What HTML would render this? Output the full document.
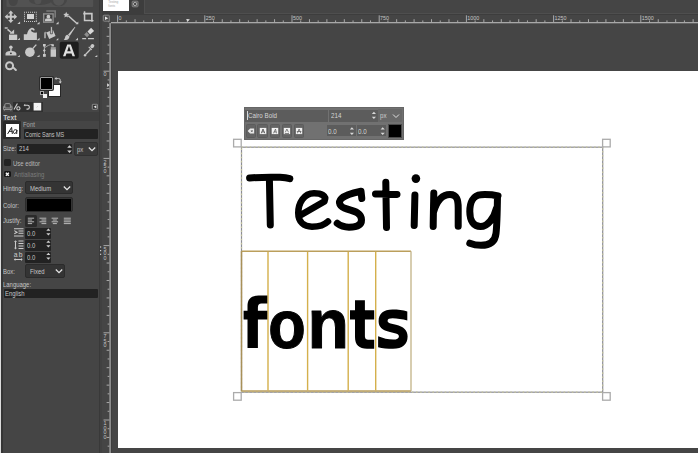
<!DOCTYPE html>
<html><head><meta charset="utf-8">
<style>
*{margin:0;padding:0;box-sizing:border-box}
html,body{width:698px;height:453px;overflow:hidden;background:#454545;font-family:"Liberation Sans",sans-serif;position:relative}
.a{position:absolute}
.lbl{position:absolute;font-size:6.6px;color:#c4c4c4;line-height:8px;white-space:nowrap;transform:scaleX(.9);transform-origin:0 0}
.ent{position:absolute;background:#222222;border-radius:1px}
.btn{position:absolute;background:#343434;border-radius:2px;border:0.8px solid #2b2b2b}
</style></head><body>
<!-- far left border -->
<div class="a" style="left:0;top:0;width:1px;height:453px;background:#dcdcdc"></div>
<div class="a" style="left:1px;top:0;width:2px;height:453px;background:#353535"></div>
<!-- dock separator -->
<div class="a" style="left:98.6px;top:0;width:1.2px;height:453px;background:#393939"></div><div class="a" style="left:99.8px;top:0;width:2.6px;height:453px;background:#414141"></div><div class="a" style="left:111px;top:23px;width:1px;height:430px;background:#3e3e3e"></div>

<!-- top tab bar -->
<div class="a" style="left:102px;top:0;width:42px;height:13.8px;background:#3d3d3d"></div>
<div class="a" style="left:144px;top:0;width:554px;height:13.8px;background:#454545;border-left:1px solid #4e4e4e;border-bottom:1px solid #4e4e4e"></div>
<div class="a" style="left:103px;top:0;width:26px;height:11px;background:#fff"></div>
<svg class="a" style="left:131px;top:0" width="9" height="9" viewBox="131 0 9 9">
<rect x="132.2" y="1.2" width="5.8" height="5.6" rx="0.8" fill="#4a4a4a" stroke="#8a8a8a" stroke-width="0.9"/>
<circle cx="135.1" cy="4" r="1.7" fill="none" stroke="#b8b8b8" stroke-width="0.9"/>
</svg>
<svg class="a" style="left:103px;top:0" width="27" height="12" viewBox="103 0 27 12">
<text x="108.3" y="3" font-size="3.2" fill="#a8a8a8" font-family="Liberation Sans">Testing</text><text x="108.3" y="6.8" font-size="3.2" fill="#a8a8a8" font-family="Liberation Sans">fonts</text>
</svg>
<div class="a" style="left:102px;top:13.8px;width:596px;height:1px;background:#3d3d3d"></div>

<!-- top ruler -->

<!-- left ruler -->
<svg class="a" style="left:0;top:0" width="698" height="453" viewBox="0 0 698 453">
<rect x="111" y="22" width="587" height="1.3" fill="#a8a8a8"/>
<rect x="109.2" y="23" width="1.8" height="430" fill="#8c8c8c"/>
<rect x="108.38" y="20.4" width="1" height="1.8" fill="#a8a8a8"/>
<rect x="117.10" y="15.3" width="1" height="7" fill="#a8a8a8"/>
<text x="118.50" y="20.2" font-size="5.4" fill="#c4c4c4" font-family="Liberation Sans">0</text>
<rect x="125.82" y="20.4" width="1" height="1.8" fill="#a8a8a8"/>
<rect x="134.54" y="19.2" width="1" height="3" fill="#a8a8a8"/>
<rect x="143.26" y="20.4" width="1" height="1.8" fill="#a8a8a8"/>
<rect x="151.98" y="19.2" width="1" height="3" fill="#a8a8a8"/>
<rect x="160.70" y="20.4" width="1" height="1.8" fill="#a8a8a8"/>
<rect x="169.42" y="19.2" width="1" height="3" fill="#a8a8a8"/>
<rect x="178.14" y="20.4" width="1" height="1.8" fill="#a8a8a8"/>
<rect x="186.86" y="19.2" width="1" height="3" fill="#a8a8a8"/>
<rect x="195.58" y="20.4" width="1" height="1.8" fill="#a8a8a8"/>
<rect x="204.30" y="15.3" width="1" height="7" fill="#a8a8a8"/>
<text x="205.70" y="20.2" font-size="5.4" fill="#c4c4c4" font-family="Liberation Sans">250</text>
<rect x="213.02" y="20.4" width="1" height="1.8" fill="#a8a8a8"/>
<rect x="221.74" y="19.2" width="1" height="3" fill="#a8a8a8"/>
<rect x="230.46" y="20.4" width="1" height="1.8" fill="#a8a8a8"/>
<rect x="239.18" y="19.2" width="1" height="3" fill="#a8a8a8"/>
<rect x="247.90" y="20.4" width="1" height="1.8" fill="#a8a8a8"/>
<rect x="256.62" y="19.2" width="1" height="3" fill="#a8a8a8"/>
<rect x="265.34" y="20.4" width="1" height="1.8" fill="#a8a8a8"/>
<rect x="274.06" y="19.2" width="1" height="3" fill="#a8a8a8"/>
<rect x="282.78" y="20.4" width="1" height="1.8" fill="#a8a8a8"/>
<rect x="291.50" y="15.3" width="1" height="7" fill="#a8a8a8"/>
<text x="292.90" y="20.2" font-size="5.4" fill="#c4c4c4" font-family="Liberation Sans">500</text>
<rect x="300.22" y="20.4" width="1" height="1.8" fill="#a8a8a8"/>
<rect x="308.94" y="19.2" width="1" height="3" fill="#a8a8a8"/>
<rect x="317.66" y="20.4" width="1" height="1.8" fill="#a8a8a8"/>
<rect x="326.38" y="19.2" width="1" height="3" fill="#a8a8a8"/>
<rect x="335.10" y="20.4" width="1" height="1.8" fill="#a8a8a8"/>
<rect x="343.82" y="19.2" width="1" height="3" fill="#a8a8a8"/>
<rect x="352.54" y="20.4" width="1" height="1.8" fill="#a8a8a8"/>
<rect x="361.26" y="19.2" width="1" height="3" fill="#a8a8a8"/>
<rect x="369.98" y="20.4" width="1" height="1.8" fill="#a8a8a8"/>
<rect x="378.70" y="15.3" width="1" height="7" fill="#a8a8a8"/>
<text x="380.10" y="20.2" font-size="5.4" fill="#c4c4c4" font-family="Liberation Sans">750</text>
<rect x="387.42" y="20.4" width="1" height="1.8" fill="#a8a8a8"/>
<rect x="396.14" y="19.2" width="1" height="3" fill="#a8a8a8"/>
<rect x="404.86" y="20.4" width="1" height="1.8" fill="#a8a8a8"/>
<rect x="413.58" y="19.2" width="1" height="3" fill="#a8a8a8"/>
<rect x="422.30" y="20.4" width="1" height="1.8" fill="#a8a8a8"/>
<rect x="431.02" y="19.2" width="1" height="3" fill="#a8a8a8"/>
<rect x="439.74" y="20.4" width="1" height="1.8" fill="#a8a8a8"/>
<rect x="448.46" y="19.2" width="1" height="3" fill="#a8a8a8"/>
<rect x="457.18" y="20.4" width="1" height="1.8" fill="#a8a8a8"/>
<rect x="465.90" y="15.3" width="1" height="7" fill="#a8a8a8"/>
<text x="467.30" y="20.2" font-size="5.4" fill="#c4c4c4" font-family="Liberation Sans">1000</text>
<rect x="474.62" y="20.4" width="1" height="1.8" fill="#a8a8a8"/>
<rect x="483.34" y="19.2" width="1" height="3" fill="#a8a8a8"/>
<rect x="492.06" y="20.4" width="1" height="1.8" fill="#a8a8a8"/>
<rect x="500.78" y="19.2" width="1" height="3" fill="#a8a8a8"/>
<rect x="509.50" y="20.4" width="1" height="1.8" fill="#a8a8a8"/>
<rect x="518.22" y="19.2" width="1" height="3" fill="#a8a8a8"/>
<rect x="526.94" y="20.4" width="1" height="1.8" fill="#a8a8a8"/>
<rect x="535.66" y="19.2" width="1" height="3" fill="#a8a8a8"/>
<rect x="544.38" y="20.4" width="1" height="1.8" fill="#a8a8a8"/>
<rect x="553.10" y="15.3" width="1" height="7" fill="#a8a8a8"/>
<text x="554.50" y="20.2" font-size="5.4" fill="#c4c4c4" font-family="Liberation Sans">1250</text>
<rect x="561.82" y="20.4" width="1" height="1.8" fill="#a8a8a8"/>
<rect x="570.54" y="19.2" width="1" height="3" fill="#a8a8a8"/>
<rect x="579.26" y="20.4" width="1" height="1.8" fill="#a8a8a8"/>
<rect x="587.98" y="19.2" width="1" height="3" fill="#a8a8a8"/>
<rect x="596.70" y="20.4" width="1" height="1.8" fill="#a8a8a8"/>
<rect x="605.42" y="19.2" width="1" height="3" fill="#a8a8a8"/>
<rect x="614.14" y="20.4" width="1" height="1.8" fill="#a8a8a8"/>
<rect x="622.86" y="19.2" width="1" height="3" fill="#a8a8a8"/>
<rect x="631.58" y="20.4" width="1" height="1.8" fill="#a8a8a8"/>
<rect x="640.30" y="15.3" width="1" height="7" fill="#a8a8a8"/>
<text x="641.70" y="20.2" font-size="5.4" fill="#c4c4c4" font-family="Liberation Sans">1500</text>
<rect x="649.02" y="20.4" width="1" height="1.8" fill="#a8a8a8"/>
<rect x="657.74" y="19.2" width="1" height="3" fill="#a8a8a8"/>
<rect x="666.46" y="20.4" width="1" height="1.8" fill="#a8a8a8"/>
<rect x="675.18" y="19.2" width="1" height="3" fill="#a8a8a8"/>
<rect x="683.90" y="20.4" width="1" height="1.8" fill="#a8a8a8"/>
<rect x="692.62" y="19.2" width="1" height="3" fill="#a8a8a8"/>
<rect x="107.6" y="27.10" width="1.8" height="1" fill="#a8a8a8"/>
<rect x="106.6" y="35.82" width="2.8" height="1" fill="#a8a8a8"/>
<rect x="107.6" y="44.54" width="1.8" height="1" fill="#a8a8a8"/>
<rect x="106.6" y="53.26" width="2.8" height="1" fill="#a8a8a8"/>
<rect x="107.6" y="61.98" width="1.8" height="1" fill="#a8a8a8"/>
<rect x="103.5" y="70.70" width="6" height="1" fill="#a8a8a8"/>
<text x="103.4" y="76.30" font-size="5.4" fill="#c4c4c4" font-family="Liberation Sans">0</text>
<rect x="107.6" y="79.42" width="1.8" height="1" fill="#a8a8a8"/>
<rect x="106.6" y="88.14" width="2.8" height="1" fill="#a8a8a8"/>
<rect x="107.6" y="96.86" width="1.8" height="1" fill="#a8a8a8"/>
<rect x="106.6" y="105.58" width="2.8" height="1" fill="#a8a8a8"/>
<rect x="107.6" y="114.30" width="1.8" height="1" fill="#a8a8a8"/>
<rect x="106.6" y="123.02" width="2.8" height="1" fill="#a8a8a8"/>
<rect x="107.6" y="131.74" width="1.8" height="1" fill="#a8a8a8"/>
<rect x="106.6" y="140.46" width="2.8" height="1" fill="#a8a8a8"/>
<rect x="107.6" y="149.18" width="1.8" height="1" fill="#a8a8a8"/>
<rect x="103.5" y="157.90" width="6" height="1" fill="#a8a8a8"/>
<text x="103.4" y="163.50" font-size="5.4" fill="#c4c4c4" font-family="Liberation Sans">2</text><text x="103.4" y="168.10" font-size="5.4" fill="#c4c4c4" font-family="Liberation Sans">5</text><text x="103.4" y="172.70" font-size="5.4" fill="#c4c4c4" font-family="Liberation Sans">0</text>
<rect x="107.6" y="166.62" width="1.8" height="1" fill="#a8a8a8"/>
<rect x="106.6" y="175.34" width="2.8" height="1" fill="#a8a8a8"/>
<rect x="107.6" y="184.06" width="1.8" height="1" fill="#a8a8a8"/>
<rect x="106.6" y="192.78" width="2.8" height="1" fill="#a8a8a8"/>
<rect x="107.6" y="201.50" width="1.8" height="1" fill="#a8a8a8"/>
<rect x="106.6" y="210.22" width="2.8" height="1" fill="#a8a8a8"/>
<rect x="107.6" y="218.94" width="1.8" height="1" fill="#a8a8a8"/>
<rect x="106.6" y="227.66" width="2.8" height="1" fill="#a8a8a8"/>
<rect x="107.6" y="236.38" width="1.8" height="1" fill="#a8a8a8"/>
<rect x="103.5" y="245.10" width="6" height="1" fill="#a8a8a8"/>
<text x="103.4" y="250.70" font-size="5.4" fill="#c4c4c4" font-family="Liberation Sans">5</text><text x="103.4" y="255.30" font-size="5.4" fill="#c4c4c4" font-family="Liberation Sans">0</text><text x="103.4" y="259.90" font-size="5.4" fill="#c4c4c4" font-family="Liberation Sans">0</text>
<rect x="107.6" y="253.82" width="1.8" height="1" fill="#a8a8a8"/>
<rect x="106.6" y="262.54" width="2.8" height="1" fill="#a8a8a8"/>
<rect x="107.6" y="271.26" width="1.8" height="1" fill="#a8a8a8"/>
<rect x="106.6" y="279.98" width="2.8" height="1" fill="#a8a8a8"/>
<rect x="107.6" y="288.70" width="1.8" height="1" fill="#a8a8a8"/>
<rect x="106.6" y="297.42" width="2.8" height="1" fill="#a8a8a8"/>
<rect x="107.6" y="306.14" width="1.8" height="1" fill="#a8a8a8"/>
<rect x="106.6" y="314.86" width="2.8" height="1" fill="#a8a8a8"/>
<rect x="107.6" y="323.58" width="1.8" height="1" fill="#a8a8a8"/>
<rect x="103.5" y="332.30" width="6" height="1" fill="#a8a8a8"/>
<text x="103.4" y="337.90" font-size="5.4" fill="#c4c4c4" font-family="Liberation Sans">7</text><text x="103.4" y="342.50" font-size="5.4" fill="#c4c4c4" font-family="Liberation Sans">5</text><text x="103.4" y="347.10" font-size="5.4" fill="#c4c4c4" font-family="Liberation Sans">0</text>
<rect x="107.6" y="341.02" width="1.8" height="1" fill="#a8a8a8"/>
<rect x="106.6" y="349.74" width="2.8" height="1" fill="#a8a8a8"/>
<rect x="107.6" y="358.46" width="1.8" height="1" fill="#a8a8a8"/>
<rect x="106.6" y="367.18" width="2.8" height="1" fill="#a8a8a8"/>
<rect x="107.6" y="375.90" width="1.8" height="1" fill="#a8a8a8"/>
<rect x="106.6" y="384.62" width="2.8" height="1" fill="#a8a8a8"/>
<rect x="107.6" y="393.34" width="1.8" height="1" fill="#a8a8a8"/>
<rect x="106.6" y="402.06" width="2.8" height="1" fill="#a8a8a8"/>
<rect x="107.6" y="410.78" width="1.8" height="1" fill="#a8a8a8"/>
<rect x="103.5" y="419.50" width="6" height="1" fill="#a8a8a8"/>
<text x="103.4" y="425.10" font-size="5.4" fill="#c4c4c4" font-family="Liberation Sans">1</text><text x="103.4" y="429.70" font-size="5.4" fill="#c4c4c4" font-family="Liberation Sans">0</text><text x="103.4" y="434.30" font-size="5.4" fill="#c4c4c4" font-family="Liberation Sans">0</text><text x="103.4" y="438.90" font-size="5.4" fill="#c4c4c4" font-family="Liberation Sans">0</text>
<rect x="107.6" y="428.22" width="1.8" height="1" fill="#a8a8a8"/>
<rect x="106.6" y="436.94" width="2.8" height="1" fill="#a8a8a8"/>
<rect x="107.6" y="445.66" width="1.8" height="1" fill="#a8a8a8"/>
<path d="M186 19.3h3.8l-1.9 2.2z" fill="#e8e8e8"/>
<path d="M107.2 83.2v3.8l2.2-1.9z" fill="#e8e8e8"/>
</svg>
<svg class="a" style="left:102px;top:14px" width="9" height="9" viewBox="102 14 9 9">
<rect x="103.3" y="15.2" width="6" height="6" rx="0.8" fill="#4c4c4c" stroke="#8c8c8c" stroke-width="0.9"/>
<path d="M105 16.4l3.2 1.8-3.2 1.8z" fill="#e8e8e8"/>
</svg>

<!-- image -->
<div class="a" style="left:118px;top:71px;width:580px;height:377px;background:#fff"></div>

<svg class="a" style="left:0;top:0" width="100" height="100" viewBox="0 0 100 100">
<path d="M6.5 0H93.2V6Q93.2 7 92.2 7H7.5Q6.5 7 6.5 6Z" fill="#525252"/>
<ellipse cx="13.2" cy="0.5" rx="4.6" ry="5.6" fill="#464646"/>
<ellipse cx="40.5" cy="0" rx="11.5" ry="5" fill="#474747"/>
<ellipse cx="58.7" cy="0" rx="8.3" ry="6.3" fill="#474747"/>
<ellipse cx="37.9" cy="0" rx="3.6" ry="4.2" fill="#535353"/>
<ellipse cx="58.7" cy="0" rx="5.6" ry="5.8" fill="#555555"/>
<g fill="#c8c8c8" stroke="none">
<!-- move -->
<path d="M9.8 13h2v7.6h-2z M7 15.8h7.6v2h-7.6z"/>
<path d="M10.8 10.6l2.7 3h-5.4z M10.8 23l2.7-3h-5.4z M4.7 16.8l3-2.7v5.4z M17.1 16.8l-3-2.7v5.4z"/>
<!-- rect select -->
<path d="M24 11.8h1v1h-1z M26 11.8h1v1h-1z M28 11.8h1v1h-1z M30 11.8h1v1h-1z M32 11.8h1v1h-1z M34 11.8h1v1h-1z M35.8 11.8h1v1h-1z
M24 13.8h1v1h-1z M24 15.8h1v1h-1z M24 17.8h1v1h-1z M24 19.8h1v1h-1z M24 21h1v1h-1z
M35.8 13.8h1v1h-1z M35.8 15.8h1v1h-1z M35.8 17.8h1v1h-1z M35.8 19.8h1v1h-1z M35.8 21h1v1h-1z
M26 21h1v1h-1z M28 21h1v1h-1z M30 21h1v1h-1z M32 21h1v1h-1z M34 21h1v1h-1z"/>
<rect x="27" y="14" width="7" height="5" fill="#d4d4d4"/>
<!-- fg select -->
<path d="M46.3 10.2h9.7v7.3h-1.6v-5.7h-8.1z" fill="#7a7a7a"/>
<rect x="43.7" y="13.9" width="9.4" height="8.3" fill="#3c3c3c" stroke="#8e8e8e" stroke-width="1.4"/>
<circle cx="48.4" cy="16.7" r="1.9"/>
<path d="M45 21.2v-1.4q0-1.2 1.2-1.2h4.4q1.2 0 1.2 1.2v1.4z"/>
<!-- wand -->
<path d="M66.2 11.8l0.9 1.9 2 0.3-1.5 1.4 0.4 2-1.8-1-1.8 1 0.4-2-1.5-1.4 2-0.3z"/>
<path d="M67.8 16.2l1-1 8.6 7.8-1 1z"/>
<!-- crop -->
<path d="M83.8 11.2h1.5v8.5h5.2v1.6h-6.7z M83.2 12.8h9.5v1.6h-9.5z M91.1 12.8h1.6v8.9h-1.6z M90.5 20.1h3v1.2h-3z"/>
<!-- unified transform -->
<path d="M4.7 27.3h3v1.4h-3z"/>
<path d="M8 28.8l4 3.4-1 1.1-4-3.4z"/>
<path d="M14.1 33.8v-4.2l-4.5 4.2z"/>
<rect x="9" y="34.6" width="8.2" height="5.4" fill="#cacaca"/>
<!-- warp -->
<path d="M23.8 34.2h3.2c0.6-2.5 1.6-5.6 4.2-6.3 1.8-0.5 3.4 0.6 3.6 2.3l-1.6 0.2c-0.3-0.8-1-1-1.5-0.9-1 0.3-0.6 1.6 0.3 2.2 1 0.7 2.3 1 3.3 1 0.4 0 0.9-0.1 1.1-0.1h0.5v7.4h-13.1z"/>
<!-- bucket -->
<path d="M46.3 32.6l6.6-2.8 2.7 6.3-6.4 3z"/>
<path d="M50.4 26.6h2v7.2h-2z" stroke="#3a3a3a" stroke-width="0.7"/>
<path d="M44 38.2v-4.6c0-1.2 0.9-1.9 2-1.7l0.9 0.2-0.9 1.2v4.9z" fill="#9a9a9a"/>
<!-- brush -->
<path d="M74.9 26.8l0.4 0.5-5.6 8.6-1.7-1.1z"/>
<path d="M67.4 34.8l2.2 1.6c-0.5 1.7-1.3 3-2.6 3.4-1.2 0.4-2.6 0.2-3.3 0.2 0.7-0.6 1.1-1.7 1.5-3 0.4-1.3 1.2-2.3 2.2-2.2z"/>
<!-- eraser -->
<path d="M91.1 27.8l3 3.2-4 3.5-2.6-3.1z" fill="#d8d8d8"/>
<path d="M86.7 31.9l2.6 3.1-2.3 2.2-2.8-2.8z" fill="#8e8e8e"/>
<path d="M82.2 38h3.9v1.3h-3.9z M88 38h5.9v1.3h-5.9z"/>
<!-- clone -->
<circle cx="10.9" cy="47.3" r="1.7"/>
<path d="M10.2 48.5h1.4v2.8h-1.4z"/>
<path d="M5.5 55.4v-1.6c0-1.6 2-2.6 4.7-2.8h1.4c2.7 0.2 4.8 1.2 4.8 2.8v1.6z"/>
<circle cx="10.9" cy="53.3" r="0.9" fill="#333"/>
<!-- dodge -->
<circle cx="29.9" cy="52.2" r="4.8"/>
<path d="M32.2 48.2l3.6-4 1 0.9-3.6 4z"/>
<!-- paths -->
<rect x="43" y="44" width="2.7" height="2.5"/>
<path d="M44.3 49.1l1.4 1.4-1.4 1.4-1.4-1.4z"/>
<rect x="43" y="54" width="2.8" height="2.8"/>
<path d="M43.9 46h0.8v8.5h-0.8z"/>
<path d="M45.3 47.6c2-2 4.5-3.2 7.4-3.2" fill="none" stroke="#c8c8c8" stroke-width="0.7"/>
<rect x="51.4" y="44.3" width="2.5" height="2.1"/>
<rect x="50.8" y="47.4" width="5" height="1.3"/>
<rect x="50.6" y="49.2" width="5.4" height="7.6"/>
<!-- picker -->
<ellipse cx="92.3" cy="46.1" rx="1.9" ry="2.2" transform="rotate(40 92.3 46.1)"/>
<path d="M88.3 47.3l0.8-0.8 3 3-0.8 0.8z"/>
<path d="M90.1 48.8l0.9 0.9-5 5.2-0.9-0.9z"/>
<circle cx="85" cy="55.3" r="1.2"/>
<!-- magnifier -->
<path d="M12.2 67.8l1.4-1.4 3.2 3.2 0 0.8-0.6 0.6h-0.8z"/>
<!-- small triangles -->
<path d="M17.3 24h2.8v-2.6z M36.8 24.2h2.8v-2.4z M55.8 24.2h2.8v-2.6z M75.5 24.2h2.8v-2.6z
M17.5 40h2.4v-2.2z M36.8 40.2h2.8v-2.4z M56 40.2h2.3v-2.2z M75.4 40.2h2.6v-2.4z
M17.5 57h2.3v-2.1z M36.8 57h2.8v-2.2z M94.7 57.1h2.6v-2.1z"/>
</g>
<circle cx="9.55" cy="65.75" r="3.5" fill="none" stroke="#c8c8c8" stroke-width="2"/>
<rect x="59.7" y="41.8" width="19" height="16.9" rx="2" fill="#1e1e1e"/>
<path d="M63 56.2l4.2-11.7h3.6l4.2 11.7h-2.5l-0.95-2.8h-5.1l-0.95 2.8z M67.2 51.2h3.6l-1.8-5.2z" fill="#e0e0e0" fill-rule="evenodd"/>
</svg>

<!-- FG/BG -->
<div class="a" style="left:48px;top:84px;width:13px;height:13px;background:#fff;border:1px solid #262626"></div>
<div class="a" style="left:40px;top:77px;width:13px;height:13px;background:#000;border:1px solid #9c9c9c;border-radius:1px;box-shadow:0 0 0 1px #2c2c2c"></div>
<svg class="a" style="left:54px;top:76px" width="8" height="8" viewBox="0 0 8 8"><path d="M1.5 2.5h3.2q1.6 0 1.6 1.6v2.6" fill="none" stroke="#c8c8c8" stroke-width="0.9"/><path d="M0.5 2.5l2-1.6v3.2z M6.3 7.6l-1.6-2h3.2z" fill="#c8c8c8"/></svg>
<div class="a" style="left:40px;top:91px;width:4px;height:4px;background:#000;border:1px solid #a8a8a8"></div>
<div class="a" style="left:43px;top:94px;width:4px;height:4px;background:#f0f0f0"></div>

<!-- dock tabs -->
<div class="a" style="left:12.5px;top:102px;width:30px;height:9.5px;background:#303030"></div>
<svg class="a" style="left:0;top:100px" width="100" height="14" viewBox="0 100 100 14">
<g fill="none" stroke="#9c9c9c" stroke-width="0.9">
<path d="M4.8 107.5v-2.6q0-1.3 1.3-1.3h3q1.3 0 1.3 1.3v2.6 M3.6 109.5v-2.8q0-0.6 0.6-0.6t0.6 0.6v1.3h6v-1.3q0-0.6 0.6-0.6t0.6 0.6v2.8z M4.4 109.5v1.2 M10.8 109.5v1.2"/>
</g>
<g fill="none" stroke="#d0d0d0" stroke-width="1.1">
<path d="M14 109.6l3.4-6.2"/>
<circle cx="18.4" cy="108.4" r="1.6"/>
<path d="M24.5 105.2h3.2q1.6 0 1.6 1.7v0.5q0 1.7-1.6 1.7h-1.2"/>
</g>
<path d="M23.6 105.2l1.6-1.4v2.8z" fill="#c8c8c8"/>
<rect x="33.6" y="102.8" width="7.6" height="7.7" fill="#f4f4f4"/>
<path d="M36.5 107.5l1.5-1.5" stroke="#c0c0c0" stroke-width="0.6"/>
<rect x="92.3" y="104.3" width="5.2" height="5" fill="#2e2e2e" stroke="#a0a0a0" stroke-width="0.8" rx="0.6"/>
<path d="M93.6 106.8l2.8-1.6v3.2z" fill="#e8e8e8"/>
</svg>
<div class="a" style="left:3px;top:112px;width:96px;height:8.5px;background:#3e3e3e"></div>
<div class="lbl" style="left:3.3px;top:114px;font-weight:bold;color:#cccccc;font-size:6.6px;transform:none">Text</div>

<!-- font -->
<div class="a" style="left:3.3px;top:121px;width:18px;height:18.4px;background:#2a2a2a;border-radius:1px"></div>
<div class="a" style="left:5.7px;top:123.6px;width:13.6px;height:13.6px;background:#fff"></div>
<svg class="a" style="left:5px;top:123px" width="15" height="15" viewBox="5 123 15 15"><g fill="none" stroke="#151515" stroke-width="0.95" stroke-linecap="round"><path d="M7.8 133.6L11.6 127.4 12.3 133.6 M9.4 131.3H12"/><path d="M16.9 130.2C16.2 129.6 15.3 129.5 14.6 129.9 13.6 130.5 13.1 132 13.5 132.9 13.9 133.7 15.1 133.6 15.9 132.7 16.5 132 16.8 131 16.9 130.2L16.7 133.6"/></g></svg>
<div class="lbl" style="left:23px;top:121px;color:#a8a8a8">Font</div>
<div class="ent" style="left:23.5px;top:129px;width:74px;height:9.6px"></div>
<div class="lbl" style="left:25px;top:131px;color:#c4c4c4;transform:scaleX(.83);transform-origin:0 0">Comic Sans MS</div>

<!-- size -->
<div class="lbl" style="left:2.9px;top:145px;">Size:</div>
<div class="ent" style="left:17.2px;top:143.7px;width:55px;height:10.7px"></div>
<div class="lbl" style="left:18.8px;top:145.3px;color:#c8c8c8">214</div>
<svg class="a" style="left:66px;top:143px" width="7" height="12" viewBox="0 0 7 12"><path d="M1.2 4.8l2.3-2.6 2.3 2.6z M1.2 7.4l2.3 2.6 2.3-2.6z" fill="#d0d0d0"/></svg>
<div class="btn" style="left:74px;top:141.6px;width:24px;height:14px;background:#393939;border:0.8px solid #303030"></div>
<div class="lbl" style="left:77px;top:145.5px;color:#c0c0c0">px</div>
<svg class="a" style="left:86.6px;top:143.5px" width="10" height="10" viewBox="0 0 10 10"><path d="M1.8 3.5l3.2 3.2 3.2-3.2" fill="none" stroke="#e4e4e4" stroke-width="1.25"/></svg>

<!-- checkboxes -->
<div class="a" style="left:4.2px;top:159.4px;width:6.5px;height:6.5px;background:#232323;border-radius:1.5px"></div>
<div class="lbl" style="left:12.9px;top:159.5px;color:#b8b8b8">Use editor</div>
<div class="a" style="left:4.2px;top:170.5px;width:6.5px;height:6.3px;background:#141414;border-radius:1.5px"></div>
<svg class="a" style="left:4.2px;top:170.5px" width="7" height="7" viewBox="0 0 7 7"><path d="M1.9 1.8l2.9 2.9 M4.8 1.8l-2.9 2.9" stroke="#f4f4f4" stroke-width="1.5"/></svg>
<div class="lbl" style="left:13.6px;top:171px;color:#7c7c7c">Antialiasing</div>

<!-- hinting -->
<div class="lbl" style="left:2.9px;top:184.5px;">Hinting:</div>
<div class="btn" style="left:25px;top:180.8px;width:48px;height:13.6px"></div>
<div class="lbl" style="left:30px;top:185px;color:#c8c8c8">Medium</div>
<svg class="a" style="left:61.5px;top:182.5px" width="10" height="10" viewBox="0 0 10 10"><path d="M1.8 3.5l3.2 3.2 3.2-3.2" fill="none" stroke="#e4e4e4" stroke-width="1.25"/></svg>

<!-- color -->
<div class="lbl" style="left:2.9px;top:202px;">Color:</div>
<div class="btn" style="left:25px;top:196.5px;width:48px;height:15.8px"></div>
<div class="a" style="left:27.2px;top:198.7px;width:43.8px;height:12.2px;background:#000"></div>

<!-- justify -->
<div class="lbl" style="left:2.9px;top:217px;">Justify:</div>
<div class="a" style="left:25px;top:215px;width:11.5px;height:11.5px;background:#2a2a2a;border-radius:1.5px"></div>
<svg class="a" style="left:25px;top:214px" width="50" height="14" viewBox="25 214 50 14">
<g stroke="#cfcfcf" stroke-width="0.85">
<path d="M27.8 218.2h6.3 M27.8 220h4.3 M27.8 221.8h6.3 M27.8 223.6h4.3"/>
<path d="M39.5 218.2h6.8 M41.5 220h4.8 M39.5 221.8h6.8 M41.5 223.6h4.8"/>
<path d="M51.6 218.2h6.5 M52.8 220h4.1 M51.6 221.8h6.5 M52.8 223.6h4.1"/>
<path d="M63.8 218.2h7 M63.8 220h7 M63.8 221.8h7 M63.8 223.6h7"/>
</g>
</svg>

<!-- spin rows -->
<svg class="a" style="left:12px;top:226px" width="14" height="38" viewBox="12 226 14 38">
<g stroke="#cccccc" stroke-width="1.05" fill="none">
<path d="M14 228.7h9.5 M18.5 231h5 M18.5 233.3h5 M14 236h9.5 M14.3 230.6l2.8 1.6-2.8 1.6"/>
<path d="M18.5 241h5 M18.5 243.5h5 M18.5 246h5 M18.5 248.5h5 M15.5 241.2v7.2"/>
<path d="M14.4 259.5h7.6"/>
</g>
<path d="M15.5 240.2l1.5 1.8h-3z M15.5 249.6l1.5-1.8h-3z M13.8 259.5l1.6-1.4v2.8z M22.6 259.5l-1.6-1.4v2.8z" fill="#c4c4c4"/>
<text x="13.8" y="257.3" font-size="6.8" fill="#cccccc" font-family="Liberation Sans">a</text>
<text x="18.8" y="257.3" font-size="6.8" fill="#cccccc" font-family="Liberation Sans">b</text>
</svg>
<div class="ent" style="left:25px;top:228px;width:26px;height:10.6px"></div>
<div class="lbl" style="left:26.5px;top:229.5px;color:#c8c8c8">0.0</div>
<div class="ent" style="left:25px;top:240px;width:26px;height:10.6px"></div>
<div class="lbl" style="left:26.5px;top:241.5px;color:#c8c8c8">0.0</div>
<div class="ent" style="left:25px;top:252.3px;width:26px;height:10.6px"></div>
<div class="lbl" style="left:26.5px;top:253.8px;color:#c8c8c8">0.0</div>
<svg class="a" style="left:45px;top:227px" width="7" height="37" viewBox="0 0 7 37">
<path d="M1.3 3.8l2.1-2.3 2.1 2.3z M1.3 6.2l2.1 2.3 2.1-2.3z M1.3 15.8l2.1-2.3 2.1 2.3z M1.3 18.2l2.1 2.3 2.1-2.3z M1.3 28.1l2.1-2.3 2.1 2.3z M1.3 30.5l2.1 2.3 2.1-2.3z" fill="#d0d0d0"/>
</svg>

<!-- box -->
<div class="lbl" style="left:2.9px;top:267.5px;">Box:</div>
<div class="btn" style="left:25px;top:264.3px;width:39.5px;height:13.6px"></div>
<div class="lbl" style="left:30px;top:267.5px;color:#c8c8c8">Fixed</div>
<svg class="a" style="left:53.5px;top:266px" width="10" height="10" viewBox="0 0 10 10"><path d="M1.8 3.5l3.2 3.2 3.2-3.2" fill="none" stroke="#e4e4e4" stroke-width="1.25"/></svg>

<!-- language -->
<div class="lbl" style="left:2.9px;top:280.5px;">Language:</div>
<div class="ent" style="left:3.5px;top:288.6px;width:94px;height:9.8px"></div>
<div class="lbl" style="left:5px;top:289.5px;color:#c8c8c8">English</div>


<svg class="a" style="left:0;top:0" width="698" height="453" viewBox="0 0 698 453">
<rect x="241.5" y="147.2" width="361.2" height="245" fill="none" stroke="#8c8c96" stroke-width="1.2"/>
<rect x="241.5" y="147.2" width="361.2" height="245" fill="none" stroke="#c4c49c" stroke-width="1.2" stroke-dasharray="1.6 2.5"/>
<!-- golden char boxes -->
<g fill="none" stroke-width="1.4">
<path d="M241.5 251.2H411 M241.5 391H411" stroke="#bb9f5c"/>
<path d="M268 251.8V390.5 M307.6 251.8V390.5 M348.2 251.8V390.5 M375.7 251.8V390.5" stroke="#d4b04c"/>
</g>
<path d="M241.5 251.2V391" stroke="#a89058" stroke-width="1.5" fill="none"/><path d="M411 251.2V391" stroke="#c2b286" stroke-width="1.3" fill="none"/>
<g font-family="Liberation Sans" font-weight="bold" fill="#000" stroke="#000" stroke-width="1.0" stroke-linejoin="round">
<path stroke="none" d="M247.5 348.1V319.4H243.6V310.8H247.5V306C247.5 299 251 295.5 258.5 295.5H267.3V303.6H261.5C259 303.6 257.9 304.8 257.9 307.5V310.8H267.3V319.4H257.9V348.1Z"/>
<text transform="matrix(0.6138 0 0 0.6900 268.20 347.63)" font-size="100" vector-effect="non-scaling-stroke">o</text>
<text transform="matrix(0.6792 0 0 0.7074 307.62 347.50)" font-size="100" vector-effect="non-scaling-stroke">n</text>
<path stroke="none" d="M355 300.3H364.9V310.2H374.2V319.5H364.9V335.5C364.9 338.8 366 339.8 369 339.8H374.2V348.7H367C359 348.7 355 345 355 337V319.5H350V310.2H355Z"/>
<path stroke="none" d="M407.3 311.6C403 310.2 398 309.6 392.5 309.6C383.5 309.6 378.6 314 378.6 321.2C378.6 327.2 382.5 330.2 390 332L395.8 333.4C398.3 334.1 398.9 335 398.9 336.4C398.9 338.5 396.8 339.5 393.3 339.5C388 339.5 383 338.2 378.1 336.2V347.2C382.5 348.3 387.5 348.7 393 348.7C402.5 348.7 407.6 344 407.6 336.4C407.6 330 403.5 326.5 396 324.7L390.6 323.4C388.3 322.8 387.6 322 387.6 320.7C387.6 319 389.5 318.3 392.6 318.3C397 318.3 402.5 319.2 407.3 320.6Z"/>
</g>
<!-- Testing -->
<g fill="none" stroke="#000" stroke-width="7" stroke-linecap="round" stroke-linejoin="round">
<path d="M249.6 178C258 177.3 270 177 280 177.3C284 177.5 287 177.9 289.8 178.7"/>
<path d="M269.4 179.5C269.8 195 270.1 210 270.3 225"/>
<path d="M300.2 215.3L324.5 201.3C327 195.5 321 193.3 314 193.3C304 193.3 298.3 203 298.3 213C298.3 222 304 226.7 312 226.7C319 226.7 325 224.5 328 221.5" stroke-width="6.6"/>
<path d="M361.8 198.5L361 191.2C352 193 345 195 341.5 198.5C337.5 202.5 339.5 207 347 209C356 211.5 361.5 213.5 361.5 220C361.5 226.5 355 227.2 349 227.2C344 227.2 340 225.5 337.2 223.3"/>
<path d="M385.8 182.3C386 198 386.3 212 386.5 227.5 M375.5 194C383 193.8 390 194 397 194.4"/>
<path d="M414.9 195C414.6 205 414.4 215 414.2 225.5"/>
<path d="M433.8 193C433.6 205 433.3 215 433.2 226.5 M433.5 212C437 200 443 194.5 450 194.5C457 194.5 458.2 200 458.2 208C458.2 215 458.2 220 458.2 226.3"/>
<path d="M498 196C492 194.5 486 194.5 481 194.7C473 195 469.8 203 469.8 211.5C469.8 221 474 226.6 480.5 226.6C488 226.6 494 218 496.5 208 M497.5 196C497.3 210 497 225 496 233.5C495 242.5 489 245.3 481 245.3C476 245.3 472.5 244.3 469.8 243.2"/>
</g>
<circle cx="415.9" cy="178.6" r="4.3" fill="#000"/>
<!-- text frame -->
<g fill="none" stroke="#ababab" stroke-width="1.3">
<rect x="233.6" y="139.3" width="7.6" height="7.6"/>
<rect x="602.6" y="139.3" width="7.6" height="7.6"/>
<rect x="233.6" y="392.6" width="7.6" height="7.6"/>
<rect x="602.6" y="392.6" width="7.6" height="7.6"/>
</g>
</svg>


<!-- on-canvas text editor overlay -->
<div class="a" style="left:244px;top:107px;width:160px;height:32.5px;background:#717171;border:1px solid #666"></div>
<div class="a" style="left:245.3px;top:109.6px;width:82.3px;height:12px;background:#5c5c5c"></div>
<div class="a" style="left:247.2px;top:111px;width:0.8px;height:8.6px;background:#d8d8d8"></div>
<div class="lbl" style="left:248.3px;top:111.8px;font-size:6.9px;color:#d4d4d4">Cairo Bold</div>
<div class="a" style="left:329.2px;top:109.6px;width:48.6px;height:12px;background:#5c5c5c"></div>
<div class="lbl" style="left:330.8px;top:111.8px;font-size:6.9px;color:#d4d4d4">214</div>
<svg class="a" style="left:369.5px;top:109px" width="8" height="13" viewBox="0 0 8 13"><path d="M1.8 5l2.1-2.3 2.1 2.3z M1.8 7.8l2.1 2.3 2.1-2.3z" fill="#d8d8d8"/></svg>
<div class="a" style="left:378.2px;top:109.4px;width:23.6px;height:12.8px;background:#686868;border-radius:1px"></div>
<div class="lbl" style="left:380.2px;top:112.2px;font-size:6.9px;color:#cccccc">px</div>
<svg class="a" style="left:390.5px;top:111px" width="10" height="10" viewBox="0 0 10 10"><path d="M2 3.5l3 3 3-3" fill="none" stroke="#e0e0e0" stroke-width="1"/></svg>

<div class="a" style="left:245.9px;top:124.3px;width:10px;height:14px;background:#646464;border:0.8px solid #5c5c5c;border-radius:1.5px"></div>
<div class="a" style="left:257.3px;top:124.3px;width:10.4px;height:14px;background:#646464;border:0.8px solid #5c5c5c;border-radius:1.5px"></div>
<div class="a" style="left:269.5px;top:124.3px;width:10.4px;height:14px;background:#646464;border:0.8px solid #5c5c5c;border-radius:1.5px"></div>
<div class="a" style="left:281.7px;top:124.3px;width:10.4px;height:14px;background:#646464;border:0.8px solid #5c5c5c;border-radius:1.5px"></div>
<div class="a" style="left:294.2px;top:124.3px;width:10.2px;height:14px;background:#646464;border:0.8px solid #5c5c5c;border-radius:1.5px"></div>
<svg class="a" style="left:0;top:0" width="698" height="453" viewBox="0 0 698 453">
<path d="M247.7 131.1l2.4-2.5h4v5h-4z" fill="#ececec"/>
<path d="M250.9 130.1l1.8 2 M252.7 130.1l-1.8 2" stroke="#555" stroke-width="0.7"/>
<rect x="259.8" y="127.9" width="6.5" height="6.2" fill="#f2f2f2"/>
<rect x="271.7" y="127.9" width="6.5" height="6.2" fill="#f2f2f2"/>
<rect x="283.8" y="127.9" width="6.3" height="6.2" fill="#f2f2f2"/>
<rect x="295.9" y="127.9" width="6.3" height="6.2" fill="#f2f2f2"/>
<g fill="none" stroke="#555" stroke-width="0.9">
<path d="M261.3 133.3l1.7-4.3 1.8 4.3 M261.9 131.9h2.3"/>
<path d="M273.5 133.3l2-4.3 1 4.3 M273.9 131.9h2.3" stroke-width="0.7"/>
<path d="M285.3 132.3l1.6-3.3 1.6 3.3 M284.8 133.5h4.2" stroke-width="0.7"/>
<path d="M297.4 133.3l1.7-4.3 1.7 4.3 M296.8 131.5h4.6" stroke-width="0.7"/>
</g>
</svg>
<div class="a" style="left:326.5px;top:125.4px;width:29.3px;height:11px;background:#5c5c5c"></div>
<div class="lbl" style="left:328px;top:127.5px;font-size:6.9px;color:#d4d4d4">0.0</div>
<div class="a" style="left:356.8px;top:125.4px;width:29.3px;height:11px;background:#5c5c5c"></div>
<div class="lbl" style="left:358.3px;top:127.5px;font-size:6.9px;color:#d4d4d4">0.0</div>
<svg class="a" style="left:347.7px;top:124.5px" width="48" height="13" viewBox="0 0 48 13"><path d="M1.8 4.5l2.1-2.3 2.1 2.3z M1.8 7.8l2.1 2.3 2.1-2.3z M32.6 4.5l2.1-2.3 2.1 2.3z M32.6 7.8l2.1 2.3 2.1-2.3z" fill="#d8d8d8"/></svg>
<div class="a" style="left:388px;top:124.4px;width:13.7px;height:13.6px;background:#000;border:1px solid #4a4a4a"></div>

<svg class="a" style="left:99px;top:245px" width="4" height="11" viewBox="99 245 4 11"><rect x="100" y="246.4" width="1.2" height="1.2" fill="#d0d0d0"/><rect x="100" y="250" width="1.2" height="1.2" fill="#d0d0d0"/><rect x="100" y="253.7" width="1.2" height="1.2" fill="#d0d0d0"/></svg>
</body></html>
